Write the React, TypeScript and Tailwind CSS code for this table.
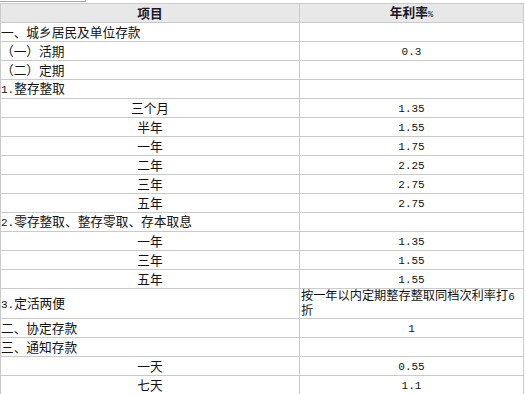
type Row = {
  label: string;
  rate?: string;
  center?: boolean;
};

const rows: Row[] = [
  { label: '一、城乡居民及单位存款' },
  { label: '（一）活期', rate: '0.3' },
  { label: '（二）定期' },
  { label: '1.整存整取' },
  { label: '三个月', rate: '1.35', center: true },
  { label: '半年', rate: '1.55', center: true },
  { label: '一年', rate: '1.75', center: true },
  { label: '二年', rate: '2.25', center: true },
  { label: '三年', rate: '2.75', center: true },
  { label: '五年', rate: '2.75', center: true },
  { label: '2.零存整取、整存零取、存本取息' },
  { label: '一年', rate: '1.35', center: true },
  { label: '三年', rate: '1.55', center: true },
  { label: '五年', rate: '1.55', center: true },
  { label: '3.定活两便', rate: 'long' },
  { label: '二、协定存款', rate: '1' },
  { label: '三、通知存款' },
  { label: '一天', rate: '0.55', center: true },
  { label: '七天', rate: '1.1', center: true },
];

// ascii bits look like a half-width bitmap font in the original
const Mixed = ({ text }: { text: string }) => {
  const parts = text.split(/([0-9.%]+)/).filter(Boolean);
  return (
    <>
      {parts.map((p, i) =>
        /^[0-9.%]+$/.test(p) ? (
          <span key={i} className="font-['Liberation_Mono',monospace] text-[11px]">
            {p}
          </span>
        ) : (
          <span key={i}>{p}</span>
        )
      )}
    </>
  );
};

const cell = 'border border-[#cacaca] p-0 leading-[14px] align-middle';

const App = () => {
  return (
    <div className="w-[526px] h-[394px] bg-white text-[12.7px] text-[#111] font-['Noto_Sans_CJK_SC',sans-serif] overflow-hidden">
      <div className="w-[86px] h-[2px] border-b border-r border-[#a5a5a5] mb-px"></div>
      <table className="w-[524px] border-collapse table-fixed">
        <colgroup>
          <col className="w-[299px]" />
          <col />
        </colgroup>
        <thead>
          <tr className="bg-[#e8e8e8]">
            <th className={`${cell} h-[19px] text-center font-bold text-[#1b1626]`}>项目</th>
            <th className={`${cell} h-[19px] text-center font-bold text-[#1b1626]`}>
              年利率<span className="font-['Liberation_Mono',monospace] text-[9px] font-normal">%</span>
            </th>
          </tr>
        </thead>
        <tbody>
          {rows.map((r, i) => (
            <tr key={i}>
              <td className={`${cell} ${r.rate === 'long' ? 'h-[29px]' : 'h-[19px]'} ${r.center ? 'text-center' : 'text-left'}`}>
                <Mixed text={r.label} />
              </td>
              {r.rate === 'long' ? (
                <td className={`${cell} h-[29px] text-left pl-px font-['Liberation_Sans','Noto_Sans_CJK_SC',sans-serif]`}>
                  <div className="whitespace-nowrap leading-[14px] text-[12.2px]">
                    按一年以内定期整存整取同档次利率打<Mixed text="6" />
                  </div>
                  <div className="leading-[14px] text-[12.2px]">折</div>
                </td>
              ) : (
                <td className={`${cell} h-[19px] text-center`}>
                  {r.rate && <Mixed text={r.rate} />}
                </td>
              )}
            </tr>
          ))}
        </tbody>
      </table>
    </div>
  );
};

export default App;
